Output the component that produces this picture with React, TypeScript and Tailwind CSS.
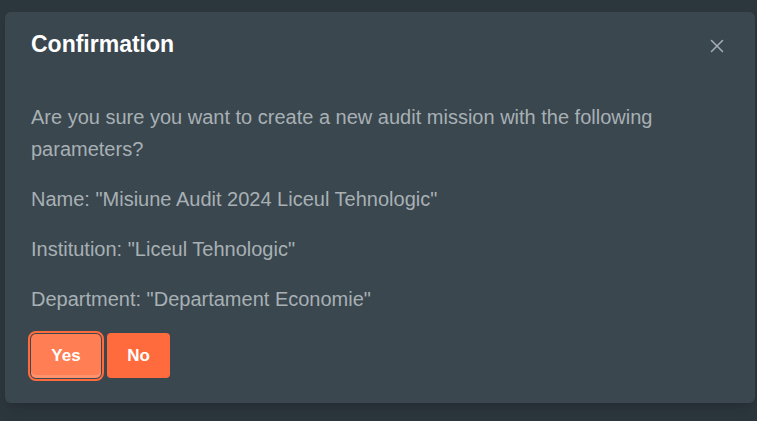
import { X } from "lucide-react";

export default function App() {
  return (
    <div
      className="h-[421px] w-[757px] overflow-hidden bg-[#2c363d] pl-[5px] pr-[2px] pt-[12px]"
      style={{ fontFamily: '"Liberation Sans", Arial, sans-serif' }}
    >
      <div className="flex h-[391px] flex-col rounded-md bg-[#3a474f] px-[26px] pt-[21px] shadow-lg">
        <div className="flex h-[22px] items-center justify-between">
          <h2 className="text-[23px] font-bold leading-none text-white">Confirmation</h2>
          <button className="mr-[1px] mt-[4px] text-[#a4adb2]">
            <X size={22} strokeWidth={1.7} />
          </button>
        </div>

        <div className="mt-[46px] flex flex-col gap-[18px] text-[20px] leading-[32px] text-[#a8b0b4]">
          <p>Are you sure you want to create a new audit mission with the following parameters?</p>
          <p>Name: "Misiune Audit 2024 Liceul Tehnologic"</p>
          <p>Institution: "Liceul Tehnologic"</p>
          <p>Department: "Departament Economie"</p>
        </div>

        <div className="mt-[18px] flex items-center gap-[6px]">
          <button className="h-[44px] w-[70px] rounded-[5px] bg-[#ff7e54] text-[17px] font-bold text-white outline outline-2 outline-offset-[1px] outline-[#ff6b3d] shadow-[inset_0_-3px_0_rgba(255,255,255,0.15)]">
            Yes
          </button>
          <button className="h-[45px] w-[63px] rounded-[4px] bg-[#ff6b3d] text-[17px] font-bold text-white">
            No
          </button>
        </div>
      </div>
    </div>
  );
}
